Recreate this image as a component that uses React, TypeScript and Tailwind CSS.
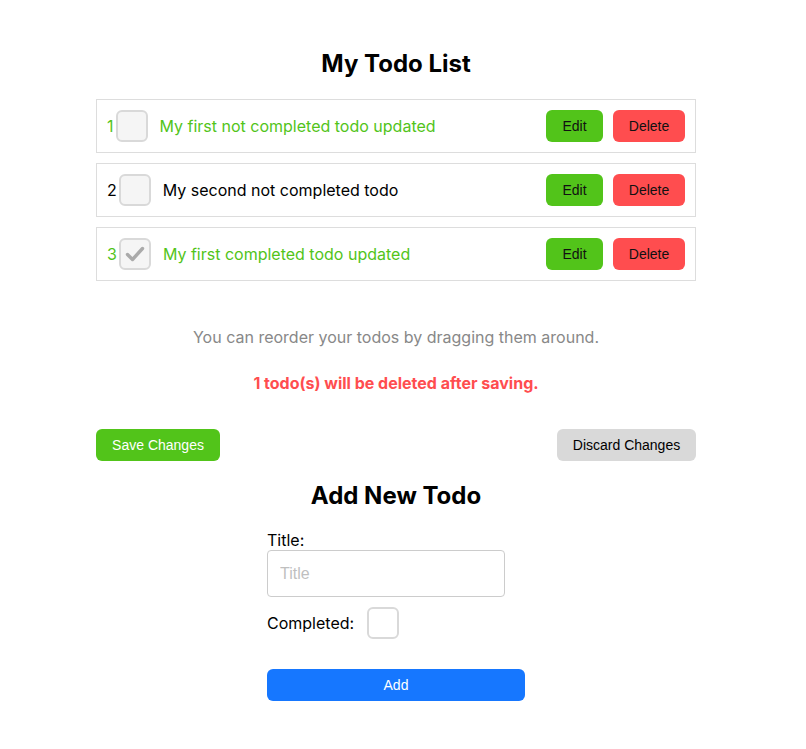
import React from "react";

const inter = { fontFamily: "Inter, 'Noto Sans', sans-serif" };

function Check({ checked, white }: { checked?: boolean; white?: boolean }) {
  return (
    <div
      className={`w-8 h-8 shrink-0 rounded-[6px] border-2 border-[#d9d9d9] flex items-center justify-center ${
        white ? "bg-white" : "bg-[#f5f5f5]"
      }`}
    >
      {checked && (
        <svg width="22" height="22" viewBox="0 0 22 22">
          <path d="M3.5 11.5 L8.5 16.5 L18.5 5.5" fill="none" stroke="#aaaaaa" strokeWidth="3.4" strokeLinecap="round" strokeLinejoin="round" />
        </svg>
      )}
    </div>
  );
}

const todos = [
  { n: 1, text: "My first not completed todo updated", green: true, checked: false },
  { n: 2, text: "My second not completed todo", green: false, checked: false },
  { n: 3, text: "My first completed todo updated", green: true, checked: true },
];

export default function App() {
  return (
    <div className="w-[792px] bg-white pb-12 text-black" style={inter}>
      <div className="w-[600px] mx-auto pt-12">
        <h1 className="text-[24px] leading-[32px] font-bold text-center mb-[19px]">My Todo List</h1>
        <div className="flex flex-col gap-[10px]">
          {todos.map((t) => (
            <div key={t.n} className="h-[54px] border border-[#dddddd] flex items-center pl-[10px] pr-[10px]">
              <span className={`text-[16px] mr-[2px] ${t.green ? "text-[#52c41a]" : "text-black"}`}>{t.n}</span>
              <Check checked={t.checked} />
              <span className={`ml-3 text-[16px] flex-1 ${t.green ? "text-[#52c41a]" : "text-black"}`}>{t.text}</span>
              <button className="h-8 w-[57px] rounded-[6px] bg-[#52c41a] text-[14px] text-[#111] font-['Liberation_Sans',Arial,sans-serif]">Edit</button>
              <button className="ml-[10px] h-8 w-[72px] rounded-[6px] bg-[#ff4d4f] text-[14px] text-[#111] font-['Liberation_Sans',Arial,sans-serif]">Delete</button>
            </div>
          ))}
        </div>
        <p className="mt-[44px] text-center text-[16px] leading-6 text-[#888888]">You can reorder your todos by dragging them around.</p>
        <p className="mt-[22px] text-center text-[16px] leading-6 font-bold text-[#ff4d4f]">1 todo(s) will be deleted after saving.</p>
        <div className="mt-[34px] flex justify-between">
          <button className="h-8 w-[124px] rounded-[6px] bg-[#52c41a] text-white text-[14px] font-['Liberation_Sans',Arial,sans-serif]">Save Changes</button>
          <button className="h-8 w-[139px] rounded-[6px] bg-[#d9d9d9] text-black text-[14px] font-['Liberation_Sans',Arial,sans-serif]">Discard Changes</button>
        </div>
        <h2 className="mt-[19px] text-[24px] leading-[32px] font-bold text-center">Add New Todo</h2>
        <div className="w-[258px] mx-auto mt-[18px] flex flex-col">
          <label className="text-[16px] leading-5">Title:</label>
          <input
            placeholder="Title"
            className="w-[238px] h-[47px] border border-[#cccccc] rounded-[4px] px-3 text-[16px] placeholder:text-[#bfbfbf] outline-none font-['Liberation_Sans',Arial,sans-serif]"
          />
          <div className="mt-[10px] flex items-center">
            <span className="text-[16px]">Completed:</span>
            <div className="ml-[13px]">
              <Check white />
            </div>
          </div>
          <button className="mt-[30px] h-8 w-full rounded-[6px] bg-[#1677ff] text-white text-[14px] font-['Liberation_Sans',Arial,sans-serif]">Add</button>
        </div>
      </div>
    </div>
  );
}
